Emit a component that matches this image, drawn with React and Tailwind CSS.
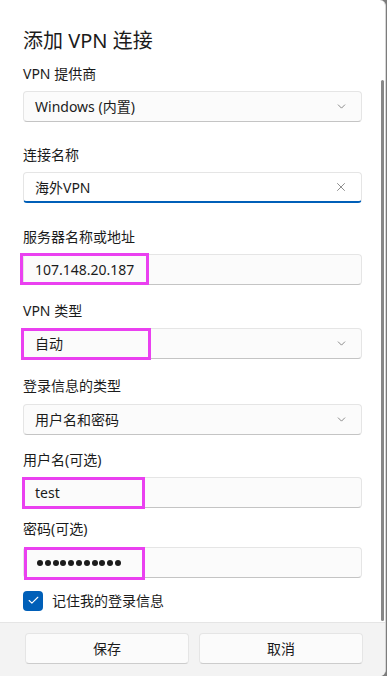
import { Check, ChevronDown, X } from "lucide-react";

const font = {
  fontFamily: '"Noto Sans", "Noto Sans CJK SC", sans-serif',
};

function Label({ children, className = "" }) {
  return (
    <div className={`h-5 text-[14px] leading-5 text-[#1b1b1b] ${className}`}>
      {children}
    </div>
  );
}

function Field({ children, right, mark, focused }) {
  return (
    <div
      className={`relative flex h-[31px] items-center rounded-[4px] border pl-[11px] pr-[13px] text-[14px] text-[#1b1b1b] ${
        focused
          ? "border-[#e5e5e5] border-b-2 border-b-[#005fb8] bg-white"
          : "border-[#e5e5e5] border-b-[#c4c4c4] bg-[#fbfbfb]"
      }`}
    >
      <div className="flex-1">{children}</div>
      {right}
      {mark && (
        <div
          className={`pointer-events-none absolute border-[3px] border-[#ea40f0] ${mark}`}
        />
      )}
    </div>
  );
}

const chevron = (
  <ChevronDown size={13} strokeWidth={1.3} className="text-[#5d5d5d]" />
);

export default function App() {
  return (
    <div className="h-[676px] w-[387px] bg-[#7c7c7c]" style={font}>
      <div className="relative flex h-[676px] w-[386px] flex-col overflow-hidden rounded-tr-[6px] rounded-br-[6px] border-r border-[#d6d6d6] bg-white">
        <div className="flex flex-1 flex-col pl-[23px] pr-[23px] pt-[27px]">
          <h1 className="h-7 text-[20px] leading-7 text-[#1b1b1b]">
            添加 VPN 连接
          </h1>

          <Label className="mt-[9px] mb-[7px]">VPN 提供商</Label>
          <Field right={chevron}>Windows (内置)</Field>

          <Label className="mt-[23px] mb-[7px]">连接名称</Label>
          <Field
            focused
            right={<X size={14} strokeWidth={1.2} className="text-[#5d5d5d]" />}
          >
            海外VPN
          </Field>

          <Label className="mt-[24px] mb-[7px]">服务器名称或地址</Label>
          <Field mark="-left-[4px] -top-[2px] h-[32px] w-[129px]">
            107.148.20.187
          </Field>

          <Label className="mt-[16px] mb-[7px]">VPN 类型</Label>
          <Field
            right={chevron}
            mark="-left-[3px] -top-[1px] h-[32px] w-[130px]"
          >
            自动
          </Field>

          <Label className="mt-[17px] mb-2">登录信息的类型</Label>
          <Field right={chevron}>用户名和密码</Field>

          <Label className="mt-[15px] mb-[7px]">用户名(可选)</Label>
          <Field mark="-left-[2px] -top-[1px] h-[32px] w-[123px]">test</Field>

          <Label className="mt-[11px] mb-2">密码(可选)</Label>
          <Field mark="left-0 -top-[1px] h-[33px] w-[121px]">
            <div className="flex items-center gap-[1.8px] pl-[2px]">
              {Array.from({ length: 11 }).map((_, i) => (
                <span
                  key={i}
                  className="h-[6px] w-[6px] rounded-full bg-[#1b1b1b]"
                />
              ))}
            </div>
          </Field>

          <div className="mt-[12px] flex items-center gap-[9px]">
            <div className="flex h-5 w-5 items-center justify-center rounded-[4px] bg-[#005fb8]">
              <Check size={13} strokeWidth={2} className="text-white" />
            </div>
            <span className="text-[14px] text-[#1b1b1b]">记住我的登录信息</span>
          </div>
        </div>

        <div className="flex h-[54px] gap-[10px] border-t border-[#e5e5e5] bg-[#f3f3f3] pl-[25px] pr-[22px] pt-[10px]">
          {["保存", "取消"].map((t) => (
            <button
              key={t}
              className="h-[31px] flex-1 rounded-[4px] border border-[#e5e5e5] border-b-[#cccccc] bg-[#fbfbfb] text-[14px] text-[#1b1b1b]"
            >
              {t}
            </button>
          ))}
        </div>

        <div className="absolute right-[1px] top-[80px] h-[541px] w-[3px] rounded-full bg-[#878787]" />
      </div>
    </div>
  );
}
